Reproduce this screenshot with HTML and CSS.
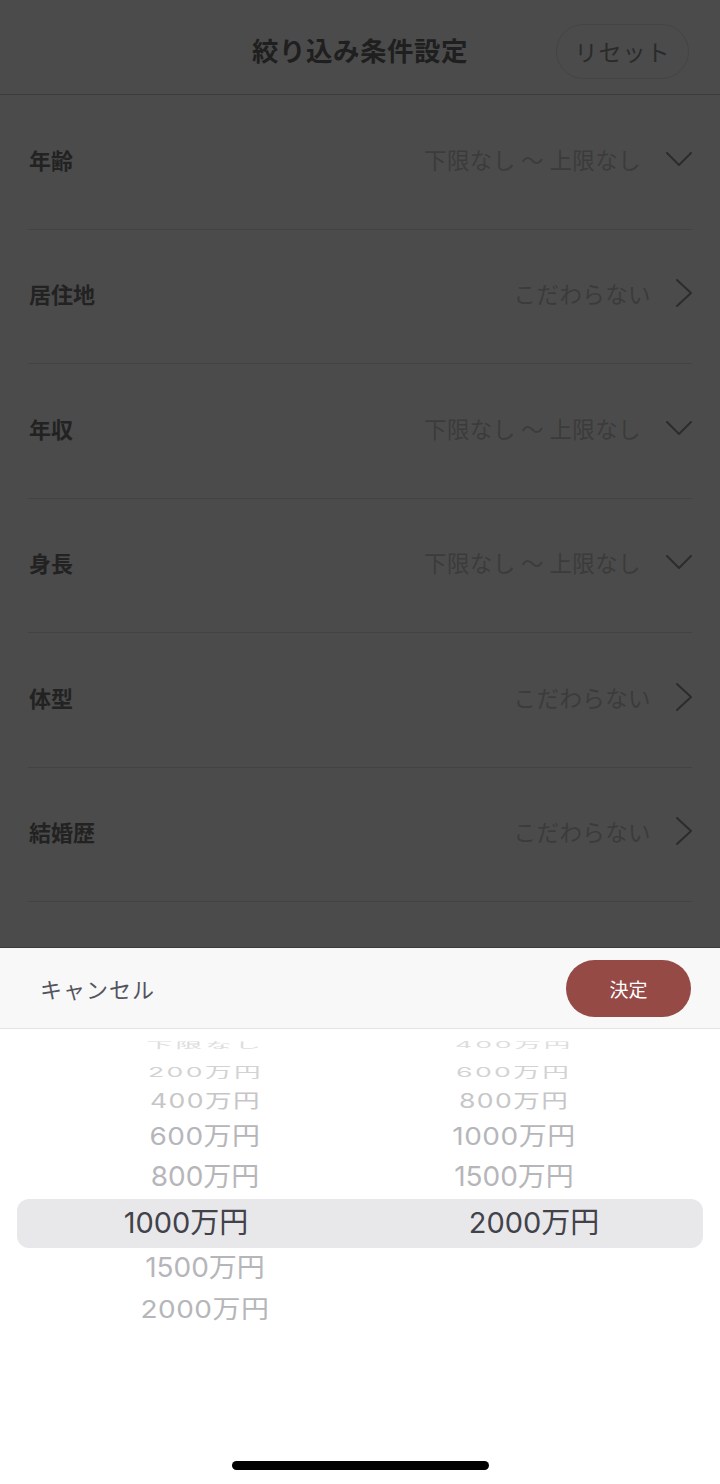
FILE: index.html
```html
<!DOCTYPE html>
<html lang="ja">
<head>
<meta charset="UTF-8">
<meta name="viewport" content="width=device-width, initial-scale=1.0">
<title>絞り込み条件設定</title>
<link rel="stylesheet" href="styles.css">
</head>
<body>
<div class="screen">

    <!-- dimmed page behind the sheet -->
    <main class="page">
        <header class="topbar">
            <span></span>
            <h1 class="title">絞り込み条件設定</h1>
            <button class="reset">リセット</button>
        </header>

        <ul class="filters">
            <li class="filter">
                <span class="label">年齢</span>
                <span class="value">下限なし&nbsp;〜&nbsp;上限なし
                    <svg class="chev-down" viewBox="0 0 26 14"><path d="M1 1 L13 13 L25 1"/></svg>
                </span>
            </li>
            <li class="filter">
                <span class="label">居住地</span>
                <span class="value">こだわらない
                    <svg class="chev-right" viewBox="0 0 16 28"><path d="M1 1 L15 14 L1 27"/></svg>
                </span>
            </li>
            <li class="filter">
                <span class="label">年収</span>
                <span class="value">下限なし&nbsp;〜&nbsp;上限なし
                    <svg class="chev-down" viewBox="0 0 26 14"><path d="M1 1 L13 13 L25 1"/></svg>
                </span>
            </li>
            <li class="filter">
                <span class="label">身長</span>
                <span class="value">下限なし&nbsp;〜&nbsp;上限なし
                    <svg class="chev-down" viewBox="0 0 26 14"><path d="M1 1 L13 13 L25 1"/></svg>
                </span>
            </li>
            <li class="filter">
                <span class="label">体型</span>
                <span class="value">こだわらない
                    <svg class="chev-right" viewBox="0 0 16 28"><path d="M1 1 L15 14 L1 27"/></svg>
                </span>
            </li>
            <li class="filter">
                <span class="label">結婚歴</span>
                <span class="value">こだわらない
                    <svg class="chev-right" viewBox="0 0 16 28"><path d="M1 1 L15 14 L1 27"/></svg>
                </span>
            </li>
        </ul>
    </main>

    <!-- picker sheet -->
    <section class="sheet">
        <div class="toolbar">
            <button class="cancel">キャンセル</button>
            <button class="done">決定</button>
        </div>

        <div class="picker">
            <div class="band"></div>
            <div class="wheels">
                <div class="wheel">
                    <div class="item i0"><span>下限なし</span></div>
                    <div class="item i1"><span>200万円</span></div>
                    <div class="item i2"><span>400万円</span></div>
                    <div class="item i3"><span>600万円</span></div>
                    <div class="item i4"><span>800万円</span></div>
                    <div class="item i5 sel-left"><span>1000万円</span></div>
                    <div class="item i6"><span>1500万円</span></div>
                    <div class="item i7"><span>2000万円</span></div>
                </div>
                <div class="wheel">
                    <div class="item i0"><span>400万円</span></div>
                    <div class="item i1"><span>600万円</span></div>
                    <div class="item i2"><span>800万円</span></div>
                    <div class="item i3"><span>1000万円</span></div>
                    <div class="item i4"><span>1500万円</span></div>
                    <div class="item i5 sel-right"><span>2000万円</span></div>
                </div>
            </div>
        </div>

        <div class="home-bar"></div>
    </section>

</div>
</body>
</html>
```

FILE: styles.css
```css
* {
    box-sizing: border-box;
}
body {
    margin: 0;
    padding: 0;
    font-family: "Noto Sans CJK JP", "Noto Sans", sans-serif;
    background-color: #ffffff;
}
button {
    font-family: inherit;
    cursor: pointer;
}
.screen {
    display: flex;
    flex-direction: column;
    width: 720px;
    height: 1484px;
    overflow: hidden;
}

/* ---------- dimmed page ---------- */
.page {
    height: 948px;
    background-color: #4b4b4b;
    border-bottom: 1px solid #3a3a3a;
}
.topbar {
    display: grid;
    grid-template-columns: 1fr auto 1fr;
    align-items: center;
    height: 95px;
    padding: 0 31px;
    border-bottom: 1px solid #3b3b3b;
}
.title {
    margin: 4px 0 0;
    font-size: 26.5px;
    font-weight: 700;
    color: #1f1f1f;
    letter-spacing: 0.5px;
}
.reset {
    justify-self: end;
    width: 133px;
    height: 55px;
    margin-top: 8px;
    border: 1px solid #444444;
    border-radius: 28px;
    background-color: transparent;
    font-size: 23px;
    color: #2a2a2a;
    letter-spacing: 1px;
}
.filters {
    list-style: none;
    margin: 0;
    padding: 0 28px;
}
.filter {
    display: flex;
    align-items: center;
    justify-content: space-between;
    height: 134.5px;
    border-bottom: 1px solid #424242;
}
.label {
    font-size: 22px;
    font-weight: 700;
    color: #222222;
    padding-left: 1px;
    margin-top: -6px;
}
.value {
    display: flex;
    align-items: center;
    gap: 25px;
    font-size: 22.5px;
    color: #3b3b3b;
    margin-top: -6px;
    letter-spacing: 0.4px;
}
.value svg {
    fill: none;
    stroke: #2c2c2c;
    stroke-width: 2;
    stroke-linecap: round;
    stroke-linejoin: round;
}
.chev-down {
    width: 26px;
    height: 14px;
}
.chev-right {
    width: 16px;
    height: 28px;
}

/* ---------- sheet ---------- */
.sheet {
    flex: 1;
    display: flex;
    flex-direction: column;
    background-color: #ffffff;
}
.toolbar {
    display: flex;
    align-items: center;
    justify-content: space-between;
    height: 81px;
    padding: 0 29px 0 40px;
    background-color: #f8f8f8;
    border-bottom: 1px solid #e4e4e4;
}
.cancel {
    border: none;
    background: none;
    padding: 0;
    font-size: 22px;
    color: #54545e;
    letter-spacing: 1px;
}
.done {
    width: 125px;
    height: 57px;
    border: none;
    border-radius: 29px;
    background-color: #954a46;
    color: #ffffff;
    font-size: 19px;
}

.picker {
    position: relative;
    height: 420px;
}
.band {
    position: absolute;
    top: 170px;
    left: 17px;
    right: 17px;
    height: 49px;
    border-radius: 12px;
    background-color: #e8e8ea;
}
.wheels {
    position: relative;
    display: grid;
    grid-template-columns: 310px 308px;
    margin-top: 11px;
    padding: 0 52px 0 50px;
    height: 320px;
    overflow: hidden;
}
.wheel {
    margin-top: -10px;
}
.item {
    display: flex;
    align-items: center;
    justify-content: center;
    font-family: Inter, "Noto Sans CJK JP", sans-serif;
    font-size: 28px;
    color: #b6b6ba;
    white-space: nowrap;
}
.item span {
    display: inline-block;
}
.i0 { height: 28px; color: #dddddd; }
.i0 span { transform: scale(0.95, 0.3); letter-spacing: 3px; }
.i1 { height: 26.5px; color: #d2d2d2; }
.i1 span { transform: scale(0.95, 0.48); letter-spacing: 2.5px; }
.i2 { height: 30px; color: #c6c6c8; }
.i2 span { transform: scale(0.95, 0.7); letter-spacing: 1.5px; }
.i3 { height: 38px; }
.i3 span { transform: scaleY(0.88); letter-spacing: 0.5px; }
.i4 { height: 43.5px; }
.i4 span { transform: scaleY(0.96); }
.i5 { height: 48px; font-size: 29px; color: #42424a; }
.i6 { height: 42px; }
.i6 span { transform: scaleY(0.96); }
.i7 { height: 42px; }
.i7 span { transform: scaleY(0.88); letter-spacing: 0.5px; }
.sel-left span { transform: translateX(-19px); }
.sel-right span { transform: translateX(20px); }

.home-bar {
    width: 257px;
    height: 9px;
    margin: auto auto 14px;
    border-radius: 5px;
    background-color: #000000;
}
```
